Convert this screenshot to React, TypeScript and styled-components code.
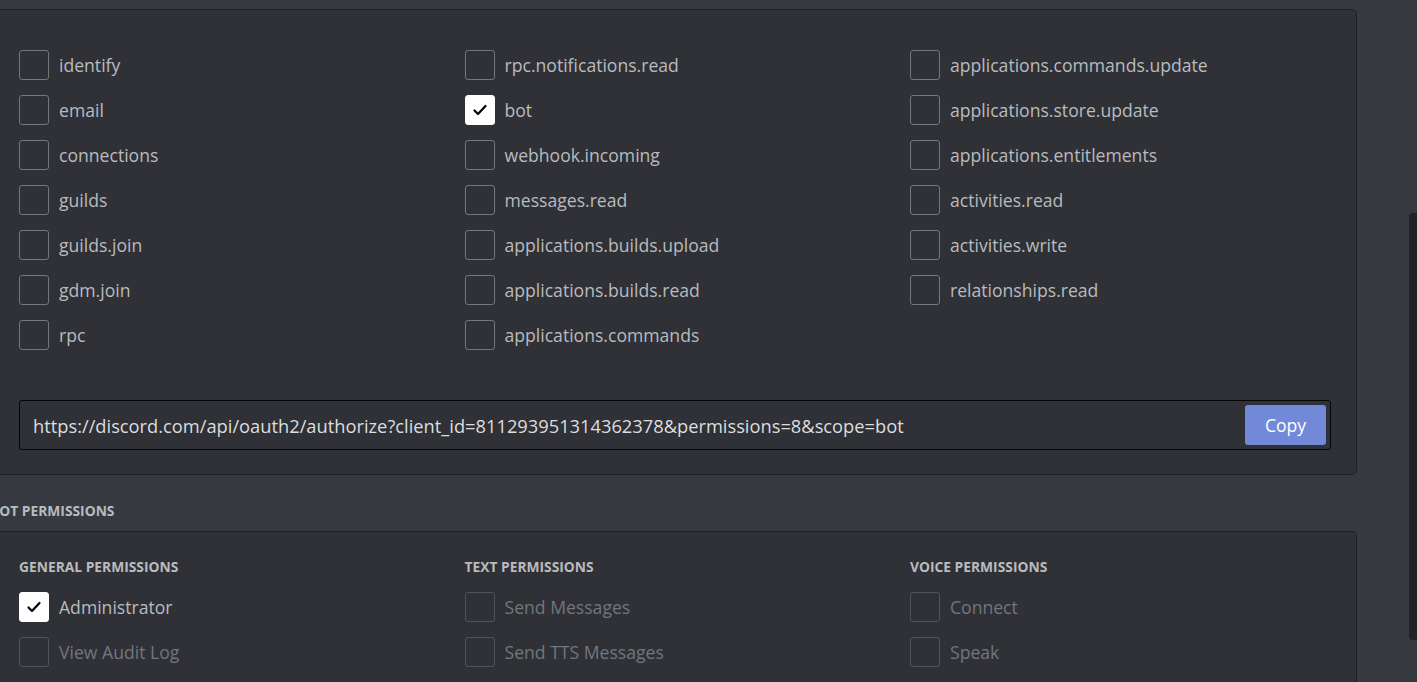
import React, { useState } from 'react';
import styled, { createGlobalStyle } from 'styled-components';

const GlobalStyle = createGlobalStyle`
  html, body {
    margin: 0;
    padding: 0;
    background: #36393f;
    overflow: hidden;
  }
  body {
    font-family: "Open Sans", "Noto Sans", sans-serif;
  }
`;

const Page = styled.div`
  width: 1417px;
  height: 682px;
  overflow: hidden;
  background: #36393f;
  position: relative;
`;

const Content = styled.div`
  margin-left: -10px;
  padding-top: 9px;
  width: 1367px;
`;

const Panel = styled.div`
  background: #2f3136;
  border: 1px solid #202225;
  border-radius: 5px;
  padding: 40px 0 24px 28px;
`;

const ScopeGrid = styled.div`
  display: grid;
  grid-template-columns: repeat(3, 445.5px);
  grid-auto-flow: column;
  grid-template-rows: repeat(7, 30px);
  row-gap: 15px;
`;

const Row = styled.label<{ $disabled?: boolean }>`
  display: flex;
  align-items: center;
  gap: 10px;
  height: 30px;
  font-size: 17.6px;
  color: ${({ $disabled }) => ($disabled ? '#72767d' : '#b9bbbe')};
  cursor: ${({ $disabled }) => ($disabled ? 'not-allowed' : 'pointer')};
  white-space: nowrap;
`;

const Box = styled.span<{ $checked?: boolean; $disabled?: boolean }>`
  width: 30px;
  height: 30px;
  box-sizing: border-box;
  border-radius: 3px;
  border: 1px solid ${({ $checked, $disabled }) =>
    $checked ? '#ffffff' : $disabled ? '#4f545c' : '#72767d'};
  background: ${({ $checked }) => ($checked ? '#ffffff' : 'transparent')};
  display: flex;
  align-items: center;
  justify-content: center;
  flex-shrink: 0;
`;

const UrlBox = styled.div`
  margin: 50px 25px 0 0;
  height: 50px;
  box-sizing: border-box;
  border: 1px solid #040405;
  border-radius: 3px;
  background: #2f3136;
  display: flex;
  align-items: center;
  padding: 0 4px 0 13px;
`;

const UrlText = styled.div`
  flex: 1;
  color: #dcddde;
  font-size: 18.3px;
  white-space: nowrap;
  overflow: hidden;
`;

const CopyButton = styled.button`
  width: 81px;
  height: 40px;
  border: none;
  border-radius: 3px;
  background: #7289da;
  color: #ffffff;
  font-family: inherit;
  font-size: 17.6px;
  cursor: pointer;
`;

const SectionTitle = styled.h2`
  margin: 0;
  padding: 27px 0 11px;
  font-size: 13.8px;
  font-weight: 700;
  line-height: 18px;
  text-transform: uppercase;
  color: #b9bbbe;
`;

const PermPanel = styled(Panel)`
  padding: 26px 0 20px 28px;
  border-bottom: none;
  border-radius: 5px 5px 0 0;
`;

const PermGrid = styled.div`
  display: grid;
  grid-template-columns: repeat(3, 445.5px);
`;

const PermColumn = styled.div`
  display: flex;
  flex-direction: column;
  gap: 15px;
`;

const ColumnTitle = styled.h3`
  margin: 0 0 1px;
  font-size: 13.8px;
  font-weight: 700;
  line-height: 18px;
  text-transform: uppercase;
  color: #b9bbbe;
`;

const Scrollbar = styled.div`
  position: absolute;
  right: 0;
  top: 213px;
  width: 8px;
  height: 427px;
  border-radius: 4px 0 0 4px;
  background: #202225;
`;

const Check = () => (
  <svg width="16" height="16" viewBox="0 0 16 16">
    <path d="M2.5 8.5 L6 12 L13.5 4" fill="none" stroke="#000" strokeWidth="2.2" strokeLinecap="round" strokeLinejoin="round" />
  </svg>
);

const scopes = [
  'identify', 'email', 'connections', 'guilds', 'guilds.join', 'gdm.join', 'rpc',
  'rpc.notifications.read', 'bot', 'webhook.incoming', 'messages.read',
  'applications.builds.upload', 'applications.builds.read', 'applications.commands',
  'applications.commands.update', 'applications.store.update', 'applications.entitlements',
  'activities.read', 'activities.write', 'relationships.read',
];

const permColumns = [
  { title: 'General Permissions', items: ['Administrator', 'View Audit Log'] },
  { title: 'Text Permissions', items: ['Send Messages', 'Send TTS Messages'] },
  { title: 'Voice Permissions', items: ['Connect', 'Speak'] },
];

export default function App() {
  const [checked, setChecked] = useState<Record<string, boolean>>({ bot: true });
  const admin = true;

  const toggle = (s: string) => setChecked((c) => ({ ...c, [s]: !c[s] }));

  return (
    <Page>
      <GlobalStyle />
      <Content>
        <Panel>
          <ScopeGrid>
            {scopes.map((s) => (
              <Row key={s} onClick={() => toggle(s)}>
                <Box $checked={checked[s]}>{checked[s] && <Check />}</Box>
                {s}
              </Row>
            ))}
          </ScopeGrid>
          <UrlBox>
            <UrlText>
              https://discord.com/api/oauth2/authorize?client_id=811293951314362378&amp;permissions=8&amp;scope=bot
            </UrlText>
            <CopyButton>Copy</CopyButton>
          </UrlBox>
        </Panel>
        <SectionTitle>Bot Permissions</SectionTitle>
        <PermPanel>
          <PermGrid>
            {permColumns.map((col) => (
              <PermColumn key={col.title}>
                <ColumnTitle>{col.title}</ColumnTitle>
                {col.items.map((item) => {
                  const isAdmin = item === 'Administrator';
                  const disabled = admin && !isAdmin;
                  return (
                    <Row key={item} $disabled={disabled}>
                      <Box $checked={isAdmin} $disabled={disabled}>{isAdmin && <Check />}</Box>
                      {item}
                    </Row>
                  );
                })}
              </PermColumn>
            ))}
          </PermGrid>
        </PermPanel>
      </Content>
      <Scrollbar />
    </Page>
  );
}
